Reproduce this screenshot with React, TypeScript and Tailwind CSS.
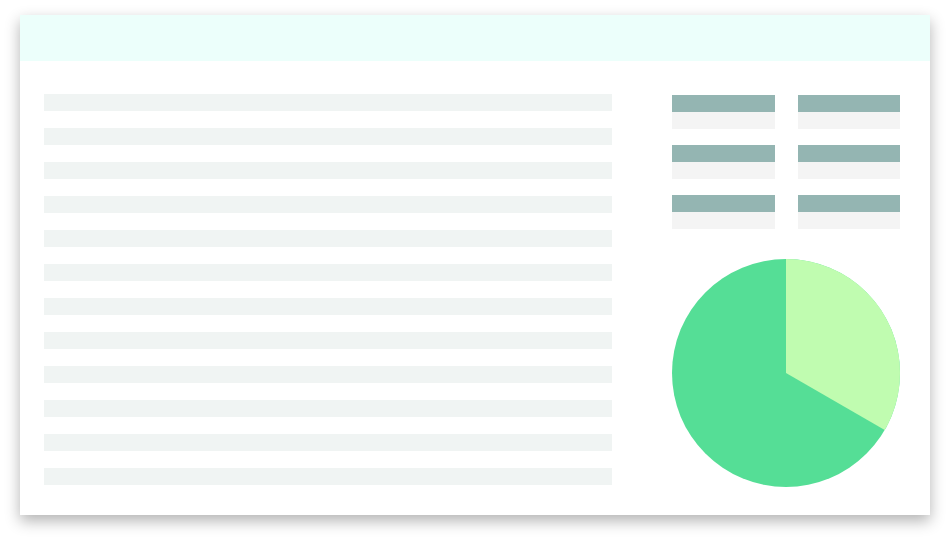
const lines = Array.from({ length: 12 }, (_, i) => i);
const tiles = Array.from({ length: 6 }, (_, i) => i);

function Pie() {
    const r = 114;
    const a = (120 * Math.PI) / 180;
    const x = r + r * Math.sin(a);
    const y = r - r * Math.cos(a);
    return (
        <svg width={228} height={228} viewBox="0 0 228 228">
            <circle cx={r} cy={r} r={r} fill="#55de96" />
            <path d={`M ${r} ${r} L ${r} 0 A ${r} ${r} 0 0 1 ${x} ${y} Z`} fill="#c0fcb0" />
        </svg>
    );
}

export default function App() {
    return (
        <div className="w-[950px] h-[540px] bg-white pt-[15px] pl-[20px]">
            <div className="w-[910px] h-[500px] bg-white flex flex-col shadow-[0_6px_14px_rgba(0,0,0,0.3)]">
                <div className="h-[46px] bg-[#ecfffb]" />
                <div className="flex pt-[33px] pl-[24px] gap-[60px]">
                    <div className="w-[568px] flex flex-col gap-[17px]">
                        {lines.map((i) => (
                            <div key={i} className="h-[17px] bg-[#f0f4f3]" />
                        ))}
                    </div>
                    <div className="w-[228px] flex flex-col pt-[1px]">
                        <div className="grid grid-cols-2 gap-x-[23px] gap-y-[16px]">
                            {tiles.map((i) => (
                                <div key={i} className="flex flex-col">
                                    <div className="h-[17px] bg-[#94b5b2]" />
                                    <div className="h-[17px] bg-[#f4f4f4]" />
                                </div>
                            ))}
                        </div>
                        <div className="mt-[30px]">
                            <Pie />
                        </div>
                    </div>
                </div>
            </div>
        </div>
    );
}
